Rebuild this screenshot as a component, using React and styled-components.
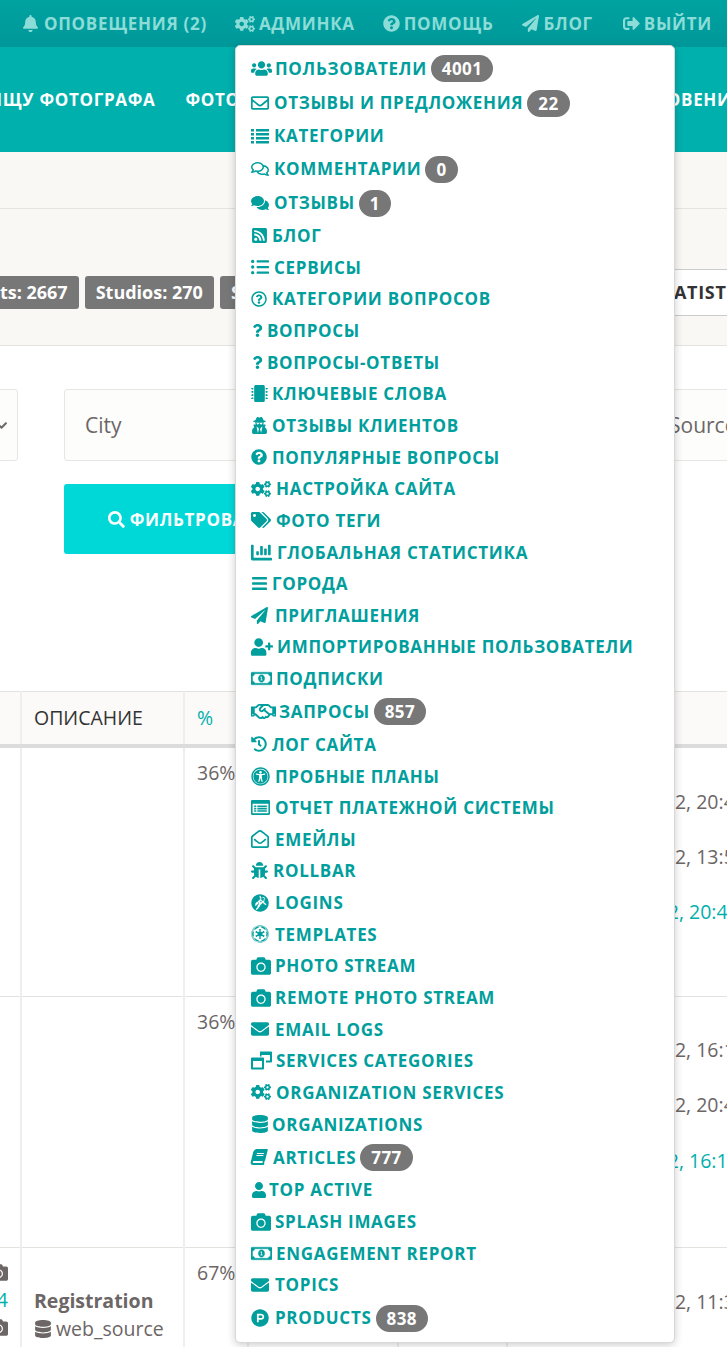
import styled, { createGlobalStyle } from "styled-components";
import {
    FaBell, FaBook, FaBug, FaBars, FaCamera, FaChartBar, FaChevronDown, FaCogs, FaComments, FaDatabase,
    FaEmpire, FaEnvelope, FaGrav, FaHistory, FaListUl, FaMicrochip, FaPaperPlane, FaProductHunt,
    FaQuestion, FaQuestionCircle, FaRegComments, FaRegEnvelope, FaRegEnvelopeOpen, FaRegHandshake,
    FaRegMoneyBillAlt, FaRegQuestionCircle, FaRssSquare, FaSearch,
    FaSignOutAlt, FaTags, FaUniversalAccess, FaUser, FaUserPlus, FaUserSecret, FaUsers,
} from "react-icons/fa";

const GlobalStyle = createGlobalStyle`
    html, body {
        margin: 0;
        padding: 0;
        background: #fff;
    }
    body {
        font-family: "Open Sans", "Liberation Sans", sans-serif;
        color: #6c6666;
    }
`;

const Page = styled.div`
    position: relative;
    width: 727px;
    height: 1347px;
    overflow: hidden;
`;

const TopBar = styled.div`
    height: 47px;
    background: linear-gradient(#00a3a1, #009799);
    display: flex;
    align-items: center;
    padding-left: 22px;
`;

const TopLink = styled.div`
    display: flex;
    align-items: center;
    gap: ${(p) => p.$gap}px;
    margin-right: ${(p) => p.$after}px;
    color: #8cdcd8;
    font-size: 17px;
    font-weight: 700;
    letter-spacing: 0.7px;
    white-space: nowrap;
    svg {
        font-size: ${(p) => p.$size || 17}px;
    }
`;

const MainNav = styled.div`
    height: 105px;
    background: #00b0ad;
    display: flex;
    align-items: center;
    margin-left: -12px;
    width: 800px;
`;

const NavLink = styled.div`
    color: #fff;
    font-size: 17px;
    font-weight: 700;
    letter-spacing: 0.7px;
    white-space: nowrap;
    margin-right: ${(p) => p.$after}px;
`;

const Strip = styled.div`
    height: 56px;
    background: #f9f8f4;
    border-bottom: 1px solid #e5e3dd;
`;

const StatsBar = styled.div`
    height: 137px;
    box-sizing: border-box;
    padding-top: 30px;
    background: #f9f8f4;
    border-bottom: 1px solid #e5e3dd;
    display: flex;
    align-items: center;
    margin-left: -56px;
    width: 900px;
    gap: 6px;
`;

const StatTag = styled.div`
    height: 33px;
    line-height: 33px;
    padding: 0 11px;
    background: #777;
    border-radius: 3px;
    color: #fff;
    font-size: 18px;
    font-weight: 700;
    white-space: nowrap;
`;

const StatsButton = styled.div`
    margin-left: 277px;
    height: 45px;
    line-height: 45px;
    padding: 0 20px;
    background: #fff;
    border: 1px solid #ccc;
    border-right: 0;
    color: #333;
    font-size: 18px;
    font-weight: 700;
    letter-spacing: 0.7px;
    white-space: nowrap;
`;

const Filters = styled.div`
    display: grid;
    grid-template-columns: 140px 538px 320px;
    column-gap: 46px;
    margin-left: -122px;
    padding-top: 43px;
    height: 345px;
    box-sizing: border-box;
    align-content: start;
`;

const Field = styled.div`
    height: 72px;
    box-sizing: border-box;
    background: #fdfdfc;
    border: 1px solid #e8e6e2;
    border-radius: 3px;
    display: flex;
    align-items: center;
    justify-content: space-between;
    padding: 0 20px;
    font-size: 21px;
    svg {
        font-size: 13px;
        margin-right: -11px;
    }
`;

const FilterButton = styled.div`
    grid-column: 2;
    width: 247px;
    margin-top: 23px;
    height: 70px;
    background: #00d8d8;
    border-radius: 3px;
    color: #fff;
    font-size: 17px;
    font-weight: 700;
    letter-spacing: 0.7px;
    display: flex;
    align-items: center;
    justify-content: center;
    gap: 5px;
`;

const Table = styled.table`
    border-collapse: collapse;
    table-layout: fixed;
    width: 900px;
    margin-left: -124px;
    font-size: 19.5px;
    th, td {
        border-left: 2px solid #eee;
        border-right: 2px solid #eee;
        box-sizing: border-box;
        padding: 11px 12px;
        vertical-align: top;
        text-align: left;
    }
`;

const HeadRow = styled.tr`
    height: 54px;
    background: #fbfaf8;
    border-top: 1px solid #e4e2de;
    border-bottom: 4px solid #dcdcdc;
    th {
        color: #333;
        font-weight: 400;
        vertical-align: middle;
        padding-top: 0;
        padding-bottom: 0;
    }
`;

const PercentHead = styled.span`
    color: #00b0ad;
`;

const BodyRow = styled.tr`
    height: ${(p) => p.$height}px;
    border-bottom: 1px solid #e4e2de;
`;

const Counts = styled.td`
    && {
        text-align: right;
        padding-top: 9px;
    }
    line-height: 29px;
    svg {
        display: block;
        margin-left: auto;
        margin-top: 6px;
        font-size: 19px;
    }
`;

const CountLink = styled.div`
    margin: 3px 0 -2px;
    color: #00b0ad;
`;

const Note = styled.div`
    margin-top: 28px;
    line-height: 28px;
    b {
        display: block;
        font-weight: 700;
    }
    svg {
        font-size: 18px;
        vertical-align: -2px;
        margin-right: 4px;
    }
`;

const DateLine = styled.div`
    margin-top: ${(p) => p.$top}px;
    padding-left: ${(p) => p.$indent}px;
    line-height: 25px;
    white-space: nowrap;
    color: ${(p) => (p.$accent ? "#00b0ad" : "inherit")};
`;

const Menu = styled.div`
    position: absolute;
    left: 235px;
    top: 45px;
    width: 440px;
    height: 1298px;
    box-sizing: border-box;
    padding: 5.4px 0 0 15px;
    background: #fff;
    border: 1px solid #d8d8d8;
    border-radius: 5px;
    box-shadow: 0 2px 8px rgba(0, 0, 0, 0.2);
`;

const MenuRow = styled.div`
    display: flex;
    align-items: center;
    height: ${(p) => (p.$tall ? 34.2 : 31.65)}px;
    color: #009e9c;
    font-size: 17px;
    font-weight: 700;
    letter-spacing: 0.7px;
    white-space: nowrap;
`;

const MenuIcon = styled.span`
    flex: none;
    display: flex;
    align-items: center;
    width: ${(p) => p.$width}px;
    svg {
        font-size: ${(p) => p.$size || 16}px;
        transform: ${(p) => (p.$slant ? "skewX(-14deg)" : "none")};
        stroke-width: ${(p) => (p.$heavy ? 12 : 0)};
    }
`;

const Badge = styled.span`
    height: 27px;
    line-height: 27px;
    margin-left: 4px;
    margin-top: 1px;
    padding: 0 11px;
    background: #777;
    border-radius: 14px;
    color: #fff;
    font-size: 17px;
    font-weight: 700;
    letter-spacing: 0.4px;
`;

// FA4 glyphs that the icon package only has in a different later drawing

function DenseListIcon() {
    return (
        <svg width="1em" height="1em" viewBox="0 0 18 16" fill="currentColor">
            <path d="M0 1h3v2.4H0zM5 1h13v2.4H5zM0 5h3v2.4H0zM5 5h13v2.4H5zM0 9h3v2.4H0zM5 9h13v2.4H5zM0 13h3v2.4H0zM5 13h13v2.4H5z" />
        </svg>
    );
}

function ReportIcon() {
    return (
        <svg width="1em" height="1em" viewBox="0 0 18 16" fill="currentColor">
            <path
                fillRule="evenodd"
                d="M1 1h16a1 1 0 0 1 1 1v12a1 1 0 0 1-1 1H1a1 1 0 0 1-1-1V2a1 1 0 0 1 1-1zM1.500 4.500v9h15v-9z"
            />
            <path d="M3 6h2v1.500H3zM6 6h9v1.500H6zM3 8.300h2v1.500H3zM6 8.300h9v1.500H6zM3 10.600h2v1.500H3zM6 10.600h9v1.500H6z" />
        </svg>
    );
}

function WindowsIcon() {
    return (
        <svg width="1em" height="1em" viewBox="0 0 21 18" fill="currentColor">
            <path
                fillRule="evenodd"
                d="M9 0h11a1 1 0 0 1 1 1v9a1 1 0 0 1-1 1h-5V9h4V3.500h-8.500V5H9z"
            />
            <path
                fillRule="evenodd"
                d="M1 6h11a1 1 0 0 1 1 1v10a1 1 0 0 1-1 1H1a1 1 0 0 1-1-1V7a1 1 0 0 1 1-1zM2 9.500V16h9V9.500z"
            />
        </svg>
    );
}

const MENU_ITEMS = [
    { label: "Пользователи", Icon: FaUsers, width: 24, size: 21, badge: 4001 },
    { label: "Отзывы и предложения", Icon: FaRegEnvelope, width: 23, size: 18, badge: 22 },
    { label: "Категории", Icon: DenseListIcon, width: 23, size: 18 },
    { label: "Комментарии", Icon: FaRegComments, width: 23, size: 18, badge: 0 },
    { label: "Отзывы", Icon: FaComments, width: 23, size: 18, badge: 1 },
    { label: "Блог", Icon: FaRssSquare, width: 21, size: 17 },
    { label: "Сервисы", Icon: FaListUl, width: 23, size: 18 },
    { label: "Категории вопросов", Icon: FaRegQuestionCircle, width: 21 },
    { label: "Вопросы", Icon: FaQuestion, width: 16, size: 13 },
    { label: "Вопросы-ответы", Icon: FaQuestion, width: 16, size: 13 },
    { label: "Ключевые слова", Icon: FaMicrochip, width: 21, size: 17 },
    { label: "Отзывы клиентов", Icon: FaUserSecret, width: 21, size: 17 },
    { label: "Популярные вопросы", Icon: FaQuestionCircle, width: 21 },
    { label: "Настройка сайта", Icon: FaCogs, width: 25, size: 20 },
    { label: "Фото теги", Icon: FaTags, width: 25, size: 20 },
    { label: "Глобальная статистика", Icon: FaChartBar, width: 26, size: 21 },
    { label: "Города", Icon: FaBars, width: 21, size: 17 },
    { label: "Приглашения", Icon: FaPaperPlane, width: 24, size: 17 },
    { label: "Импортированные пользователи", Icon: FaUserPlus, width: 26, size: 22 },
    { label: "Подписки", Icon: FaRegMoneyBillAlt, width: 25, size: 21, heavy: true },
    { label: "Запросы", Icon: FaRegHandshake, width: 28, size: 25, badge: 857 },
    { label: "Лог сайта", Icon: FaHistory, width: 21, size: 16 },
    { label: "Пробные планы", Icon: FaUniversalAccess, width: 24, size: 19 },
    { label: "Отчет платежной системы", Icon: ReportIcon, width: 24, size: 19 },
    { label: "Емейлы", Icon: FaRegEnvelopeOpen, width: 24, size: 18 },
    { label: "Rollbar", Icon: FaBug, width: 22, size: 17 },
    { label: "Logins", Icon: FaGrav, width: 24, size: 18 },
    { label: "Templates", Icon: FaEmpire, width: 24, size: 18 },
    { label: "Photo stream", Icon: FaCamera, width: 24, size: 20 },
    { label: "Remote photo stream", Icon: FaCamera, width: 24, size: 20 },
    { label: "Email logs", Icon: FaEnvelope, width: 24, size: 18 },
    { label: "Services categories", Icon: WindowsIcon, width: 25, size: 21 },
    { label: "Organization services", Icon: FaCogs, width: 25, size: 20 },
    { label: "Organizations", Icon: FaDatabase, width: 21, size: 18 },
    { label: "Articles", Icon: FaBook, width: 22, size: 16, slant: true, badge: 777 },
    { label: "Top active", Icon: FaUser, width: 18, size: 16 },
    { label: "Splash images", Icon: FaCamera, width: 24, size: 20 },
    { label: "Engagement report", Icon: FaRegMoneyBillAlt, width: 25, size: 21, heavy: true },
    { label: "Topics", Icon: FaEnvelope, width: 24, size: 18 },
    { label: "Products", Icon: FaProductHunt, width: 24, size: 18, badge: 838 },
];

function App() {
    return (
        <Page>
            <GlobalStyle />
            <TopBar>
                <TopLink $gap={5} $after={28}><FaBell />ОПОВЕЩЕНИЯ (2)</TopLink>
                <TopLink $gap={4} $after={28} $size={20}><FaCogs />АДМИНКА</TopLink>
                <TopLink $gap={4} $after={29}><FaQuestionCircle />ПОМОЩЬ</TopLink>
                <TopLink $gap={4} $after={30}><FaPaperPlane />БЛОГ</TopLink>
                <TopLink $gap={4} $after={0}><FaSignOutAlt />ВЫЙТИ</TopLink>
            </TopBar>
            <MainNav>
                <NavLink $after={30}>ИЩУ ФОТОГРАФА</NavLink>
                <NavLink $after={322}>ФОТОГРАФЫ</NavLink>
                <NavLink $after={0}>ОБНОВЕНИЯ</NavLink>
            </MainNav>
            <Strip />
            <StatsBar>
                <StatTag>Clients: 2667</StatTag>
                <StatTag>Studios: 270</StatTag>
                <StatTag>Sessions: 48</StatTag>
                <StatsButton>STATISTICS</StatsButton>
            </StatsBar>
            <Filters>
                <Field>Type<FaChevronDown /></Field>
                <Field>City</Field>
                <Field>Source</Field>
                <FilterButton><FaSearch />ФИЛЬТРОВАТЬ</FilterButton>
            </Filters>
            <Table>
                <colgroup>
                    <col width="144" />
                    <col width="163" />
                    <col width="64" />
                    <col width="150" />
                    <col width="109" />
                    <col width="270" />
                </colgroup>
                <thead>
                    <HeadRow>
                        <th>ДАТА</th>
                        <th>ОПИСАНИЕ</th>
                        <th><PercentHead>%</PercentHead></th>
                        <th />
                        <th />
                        <th />
                    </HeadRow>
                </thead>
                <tbody>
                    <BodyRow $height={251}>
                        <td />
                        <td />
                        <td>36%</td>
                        <td />
                        <td />
                        <td>
                            <DateLine $top={30} $indent={56}>Jan 12, 2022, 20:41</DateLine>
                            <DateLine $top={30} $indent={56}>Jan 14, 2022, 13:55</DateLine>
                            <DateLine $top={30} $indent={60} $accent>Jan 9, 2022, 20:41</DateLine>
                        </td>
                    </BodyRow>
                    <BodyRow $height={251}>
                        <td />
                        <td />
                        <td>36%</td>
                        <td />
                        <td />
                        <td>
                            <DateLine $top={29} $indent={56}>Jan 12, 2022, 16:12</DateLine>
                            <DateLine $top={30} $indent={56}>Jan 14, 2022, 20:41</DateLine>
                            <DateLine $top={31} $indent={60} $accent>Jan 9, 2022, 16:12</DateLine>
                        </td>
                    </BodyRow>
                    <BodyRow $height={100}>
                        <Counts>
                            <FaCamera />
                            <CountLink>14</CountLink>
                            <FaCamera />
                        </Counts>
                        <td>
                            <Note>
                                <b>Registration</b>
                                <FaDatabase />web_source
                            </Note>
                        </td>
                        <td>67%</td>
                        <td />
                        <td />
                        <td>
                            <DateLine $top={30} $indent={56}>Jan 12, 2022, 11:30</DateLine>
                        </td>
                    </BodyRow>
                </tbody>
            </Table>
            <Menu>
                {MENU_ITEMS.map(({ label, Icon, width, size, slant, heavy, badge }) => (
                    <MenuRow key={label} $tall={badge !== undefined}>
                        <MenuIcon $width={width} $size={size} $slant={slant} $heavy={heavy}><Icon /></MenuIcon>
                        {label.toUpperCase()}
                        {badge !== undefined && <Badge>{badge}</Badge>}
                    </MenuRow>
                ))}
            </Menu>
        </Page>
    );
}

export default App;
